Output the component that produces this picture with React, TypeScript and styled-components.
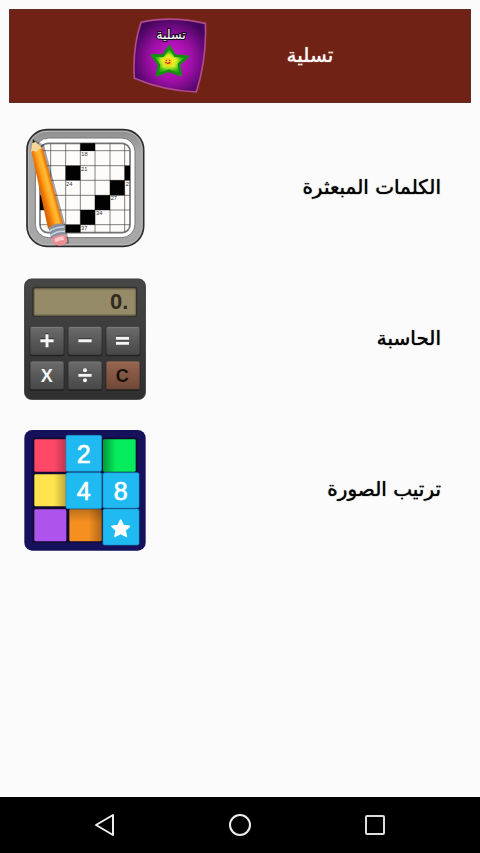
import React from "react";
import styled, { createGlobalStyle } from "styled-components";

const GlobalStyle = createGlobalStyle`
  * { box-sizing: border-box; }
  body {
    margin: 0;
    background: #fbfbfb;
    font-family: "DejaVu Sans", "Noto Sans", sans-serif;
  }
`;

const Screen = styled.div`
  display: flex;
  flex-direction: column;
  min-height: 100vh;
  background: #fbfbfb;
`;

const Header = styled.header`
  display: flex;
  direction: ltr;
  align-items: center;
  justify-content: center;
  gap: 78px;
  height: 94px;
  margin: 9px;
  padding: 0 16px 2px 0;
  background: #702214;
  border: 1px solid #5f3029;
`;

const Title = styled.h1`
  margin: 0;
  color: #fffaf7;
  font-size: 20px;
  line-height: 30px;
  font-weight: 400;
  text-shadow: 0 0 1px #fffaf7;
`;

const List = styled.ul`
  display: flex;
  flex: 1;
  flex-direction: column;
  gap: 29px;
  margin: 0;
  padding: 15px 24px;
  list-style: none;
`;

const Entry = styled.button`
  display: flex;
  direction: ltr;
  align-items: center;
  justify-content: space-between;
  width: 100%;
  padding: 0 15px 0 0;
  border: 0;
  background: none;
  color: #050505;
  font-family: inherit;
  text-align: right;
`;

const Label = styled.span`
  padding-bottom: 2px;
  font-size: 20px;
  line-height: 32px;
  font-weight: 400;
  text-shadow: 0 0 1px #050505;
`;

const Art = styled.svg<{ $size: number }>`
  display: block;
  flex: none;
  width: ${(p) => p.$size}px;
  height: ${(p) => p.$size}px;
`;

const NavBar = styled.nav`
  display: flex;
  direction: ltr;
  align-items: center;
  justify-content: center;
  gap: 87px;
  height: 56px;
  background: #000;
`;

const NavButton = styled.button`
  display: grid;
  place-items: center;
  width: 48px;
  height: 48px;
  padding: 0;
  border: 0;
  background: none;
`;

const sans = '"Liberation Sans", Arial, sans-serif';

const FunLogo = () => (
  <Art $size={78} viewBox="36 34 234 234" aria-hidden="true">
    <defs>
      <radialGradient id="funBg" cx="0.52" cy="0.55" r="0.58">
        <stop offset="0" stopColor="#d21ad2" />
        <stop offset="0.5" stopColor="#a00fa8" />
        <stop offset="1" stopColor="#42065c" />
      </radialGradient>
      <radialGradient id="funStar" cx="0.48" cy="0.52" r="0.5">
        <stop offset="0" stopColor="#ffd21e" />
        <stop offset="0.2" stopColor="#f2f02a" />
        <stop offset="0.45" stopColor="#b3e622" />
        <stop offset="0.7" stopColor="#3fbe18" />
        <stop offset="1" stopColor="#128c12" />
      </radialGradient>
    </defs>
    <path d="M66 53Q155 32 259 56Q264 160 232 262Q135 259 46 221Q40 130 66 53Z" fill="url(#funBg)" stroke="#b4498c" strokeWidth="5" strokeLinejoin="round" />
    <path d="M151 126L168 153L206 156L180 179L185 211L150 198L114 211L120 181L99 152L132 153Z" fill="url(#funStar)" stroke="#148f12" strokeWidth="8" strokeLinejoin="round" />
    <path d="M150 146L159 161L178 164L166 176L170 190L149 182L131 191L134 177L121 163L140 161Z" fill="#ecee29" opacity="0.6" />
    <circle cx="147" cy="171" r="12" fill="#ffc91d" />
    <circle cx="142" cy="167" r="2" fill="#6e4512" />
    <circle cx="152" cy="167" r="2" fill="#6e4512" />
    <path d="M139 173Q147 179 154 173" fill="none" stroke="#c13416" strokeWidth="4" />
    <text x="156" y="102" textAnchor="middle" fontFamily="DejaVu Sans, sans-serif" fontSize="38" fill="#fff" stroke="#16051f" strokeWidth="6" paintOrder="stroke">تسلية</text>
  </Art>
);

const CrosswordIcon = () => (
  <Art $size={122} viewBox="12 21 366 366" aria-hidden="true">
    <defs>
      <linearGradient id="frame" x1="0" y1="0" x2="0" y2="1">
        <stop offset="0" stopColor="#8e8e8e" />
        <stop offset="0.2" stopColor="#a9a9a9" />
        <stop offset="1" stopColor="#a6a6a6" />
      </linearGradient>
      <linearGradient id="pencil" gradientUnits="userSpaceOnUse" x1="60" y1="213" x2="104" y2="201">
        <stop offset="0" stopColor="#d96404" />
        <stop offset="0.25" stopColor="#f5820c" />
        <stop offset="0.4" stopColor="#ffa41c" />
        <stop offset="0.65" stopColor="#ffbc38" />
        <stop offset="0.8" stopColor="#f58a10" />
        <stop offset="1" stopColor="#c95706" />
      </linearGradient>
      <clipPath id="board"><rect x="60" y="70" width="270" height="268" rx="24" /></clipPath>
    </defs>
    <rect x="21" y="29" width="350" height="350" rx="60" fill="url(#frame)" stroke="#2c2c2c" strokeWidth="5" />
    <rect x="26" y="34" width="340" height="340" rx="55" fill="none" stroke="#b9b9b9" strokeWidth="3" />
    <rect x="46" y="54" width="299" height="299" rx="40" fill="#fff" stroke="#777" strokeWidth="3" />
    <rect x="60" y="70" width="270" height="268" rx="24" fill="#fdfcfb" stroke="#737373" strokeWidth="5" />
    <g clipPath="url(#board)">
      <path d="M92 70V338M137 70V338M181 70V338M225 70V338M270 70V338M314 70V338M60 92H330M60 137H330M60 181H330M60 226H330M60 270H330M60 314H330" stroke="#444" strokeWidth="2" />
      <path d="M181 68H225V93H181ZM137 137H181V181H137ZM314 137H330V181H314ZM270 181H314V226H270ZM225 226H270V270H225ZM181 270H225V314H181ZM137 314H181V338H137ZM60 226H80V270H60Z" fill="#020202" />
      <g fontFamily={sans} fontSize="17" fill="#333">
        <text x="184" y="108">18</text>
        <text x="183" y="153">21</text>
        <text x="138" y="197">24</text>
        <text x="272" y="241">27</text>
        <text x="228" y="286">34</text>
        <text x="183" y="330">37</text>
        <text x="317" y="197">2</text>
      </g>
    </g>
    <path d="M42 61L72 74L136 316L148 370L108 378L92 342L40 92Z" fill="#000" opacity="0.35" />
    <path d="M34 92L84 326L130 314L68 84L40 66Z" fill="url(#pencil)" />
    <path d="M39 58L33 96Q41 88 49 97Q55 84 68 86Z" fill="#f5d79a" />
    <path d="M39 56L37 69L47 66Z" fill="#292522" />
    <path d="M85 324Q104 309 130 311L138 344Q115 343 94 356Z" fill="#8790a0" />
    <path d="M88 334Q108 320 132 321M92 346Q112 332 135 334" fill="none" stroke="#ccd6dd" strokeWidth="5" />
    <path d="M94 355Q116 342 138 344L142 364Q138 376 119 377Q101 377 98 367Z" fill="#e98f93" />
    <path d="M103 357Q118 349 130 349L132 360Q119 360 107 367Z" fill="#ffc9ce" />
  </Art>
);

const CalculatorIcon = () => {
  const keys = [
    [31, 165], [145, 165], [259, 165],
    [31, 269], [145, 269], [259, 269],
  ];
  return (
    <Art $size={122} viewBox="12 18 366 366" aria-hidden="true">
      <defs>
        <linearGradient id="body" x1="0" y1="0" x2="0" y2="1">
          <stop offset="0" stopColor="#474747" />
          <stop offset="1" stopColor="#303030" />
        </linearGradient>
        <linearGradient id="key" x1="0" y1="0" x2="0" y2="1">
          <stop offset="0" stopColor="#6b6b6b" />
          <stop offset="1" stopColor="#474747" />
        </linearGradient>
        <linearGradient id="clear" x1="0" y1="0" x2="0" y2="1">
          <stop offset="0" stopColor="#96654f" />
          <stop offset="1" stopColor="#704837" />
        </linearGradient>
      </defs>
      <rect x="14" y="21" width="362" height="361" rx="20" fill="url(#body)" stroke="#383838" strokeWidth="3" />
      <rect x="36" y="44" width="316" height="91" rx="7" fill="#34322c" />
      <rect x="43" y="51" width="303" height="78" rx="3" fill="#968b69" stroke="#7a7053" strokeWidth="4" />
      <text x="325" y="112" textAnchor="end" fontFamily={sans} fontWeight="700" fontSize="66" fill="#302c20">0.</text>
      {keys.map(([x, y], i) => (
        <g key={i}>
          <rect x={x - 2} y={y + 1} width="104" height="87" rx="6" fill="#222" />
          <rect x={x} y={y} width="100" height="83" rx="4" fill={i === 5 ? "url(#clear)" : "url(#key)"} />
          <path d={`M${x + 4} ${y + 1}H${x + 96}`} stroke={i === 5 ? "#ac7b62" : "#8a8a8a"} strokeWidth="2" />
        </g>
      ))}
      <g fill="none" stroke="#333" strokeWidth="9" transform="translate(0 -3)">
        <path d="M61 206H101M81 187V226M175 206H215M288 199H327M288 214H327M175 310H215" />
      </g>
      <g fill="none" stroke="#f5f5f5" strokeWidth="9">
        <path d="M61 206H101M81 187V226M175 206H215M288 199H327M288 214H327M175 310H215" />
      </g>
      <circle cx="195" cy="295" r="6" fill="#f5f5f5" />
      <circle cx="195" cy="325" r="6" fill="#f5f5f5" />
      <g fontFamily={sans} fontWeight="700" fontSize="54" textAnchor="middle">
        <text x="80" y="331" fill="#f5f5f5">X</text>
        <text x="307" y="331" fill="#170f0c">C</text>
      </g>
    </Art>
  );
};

const PuzzleIcon = () => (
  <Art $size={122} viewBox="12 15 366 366" aria-hidden="true">
    <defs>
      <linearGradient id="shade" x1="0" y1="0" x2="1" y2="0">
        <stop offset="0.6" stopColor="#000" stopOpacity="0" />
        <stop offset="1" stopColor="#000" stopOpacity="0.28" />
      </linearGradient>
      <linearGradient id="shadeLeft" x1="1" y1="0" x2="0" y2="0">
        <stop offset="0.6" stopColor="#000" stopOpacity="0" />
        <stop offset="1" stopColor="#000" stopOpacity="0.35" />
      </linearGradient>
      <linearGradient id="shadeTop" x1="0" y1="1" x2="0" y2="0">
        <stop offset="0.6" stopColor="#000" stopOpacity="0" />
        <stop offset="1" stopColor="#000" stopOpacity="0.22" />
      </linearGradient>
    </defs>
    <rect x="13" y="18" width="364" height="362" rx="24" fill="#15115b" />
    <path d="M42 45H146V145H42ZM42 151H146V247H42ZM247 45H348V143H247ZM42 255H140V352H42ZM148 255H246V352H148Z" fill="#100a35" stroke="#100a35" strokeWidth="9" />
    <rect x="43" y="46" width="98" height="97" rx="4" fill="#ff4868" />
    <rect x="43" y="151" width="98" height="96" rx="4" fill="#ffe44e" />
    <rect x="43" y="256" width="96" height="96" rx="4" fill="#ae54ed" />
    <rect x="148" y="256" width="97" height="96" rx="4" fill="#f58f20" />
    <rect x="249" y="46" width="98" height="97" rx="4" fill="#05ed5c" />
    <path d="M43 46H141V143H43ZM43 151H141V247H43Z" fill="url(#shade)" />
    <path d="M148 256H245V352H148Z" fill="url(#shade)" />
    <path d="M249 46H347V143H249Z" fill="url(#shadeLeft)" />
    <path d="M148 256H245V352H148Z" fill="url(#shadeTop)" />
    <g fill="#20baf2" stroke="#188fc4" strokeWidth="2">
      <rect x="138" y="34" width="107" height="108" rx="5" />
      <rect x="138" y="146" width="107" height="108" rx="5" />
      <rect x="249" y="146" width="108" height="106" rx="5" />
      <rect x="249" y="255" width="108" height="108" rx="5" />
    </g>
    <g fontFamily={sans} fontSize="75" fill="#fff" stroke="#fff" strokeWidth="2" textAnchor="middle">
      <text x="191" y="118">2</text>
      <text x="191" y="228">4</text>
      <text x="302" y="228">8</text>
    </g>
    <path d="M302 288L310 305L328 307L315 319L319 337L302 328L285 337L289 319L276 307L294 305Z" fill="#fff" stroke="#fff" strokeWidth="5" strokeLinejoin="round" />
  </Art>
);

const entries = [
  { label: "الكلمات المبعثرة", icon: <CrosswordIcon /> },
  { label: "الحاسبة", icon: <CalculatorIcon /> },
  { label: "ترتيب الصورة", icon: <PuzzleIcon /> },
];

export default function App() {
  return (
    <Screen dir="rtl" lang="ar">
      <GlobalStyle />
      <Header>
        <FunLogo />
        <Title dir="rtl">تسلية</Title>
      </Header>
      <List>
        {entries.map((entry) => (
          <li key={entry.label}>
            <Entry type="button">
              {entry.icon}
              <Label dir="rtl">{entry.label}</Label>
            </Entry>
          </li>
        ))}
      </List>
      <NavBar>
        <NavButton type="button" aria-label="رجوع">
          <Art $size={24} viewBox="0 0 24 24" aria-hidden="true">
            <path d="M3 12L20 2V22Z" fill="none" stroke="#eee" strokeWidth="2" strokeLinejoin="round" />
          </Art>
        </NavButton>
        <NavButton type="button" aria-label="الرئيسية">
          <Art $size={24} viewBox="0 0 24 24" aria-hidden="true">
            <circle cx="12" cy="12" r="10" fill="none" stroke="#eee" strokeWidth="2" />
          </Art>
        </NavButton>
        <NavButton type="button" aria-label="التطبيقات الأخيرة">
          <Art $size={24} viewBox="0 0 24 24" aria-hidden="true">
            <rect x="3" y="3" width="18" height="18" rx="1" fill="none" stroke="#ddd" strokeWidth="2" />
          </Art>
        </NavButton>
      </NavBar>
    </Screen>
  );
}
